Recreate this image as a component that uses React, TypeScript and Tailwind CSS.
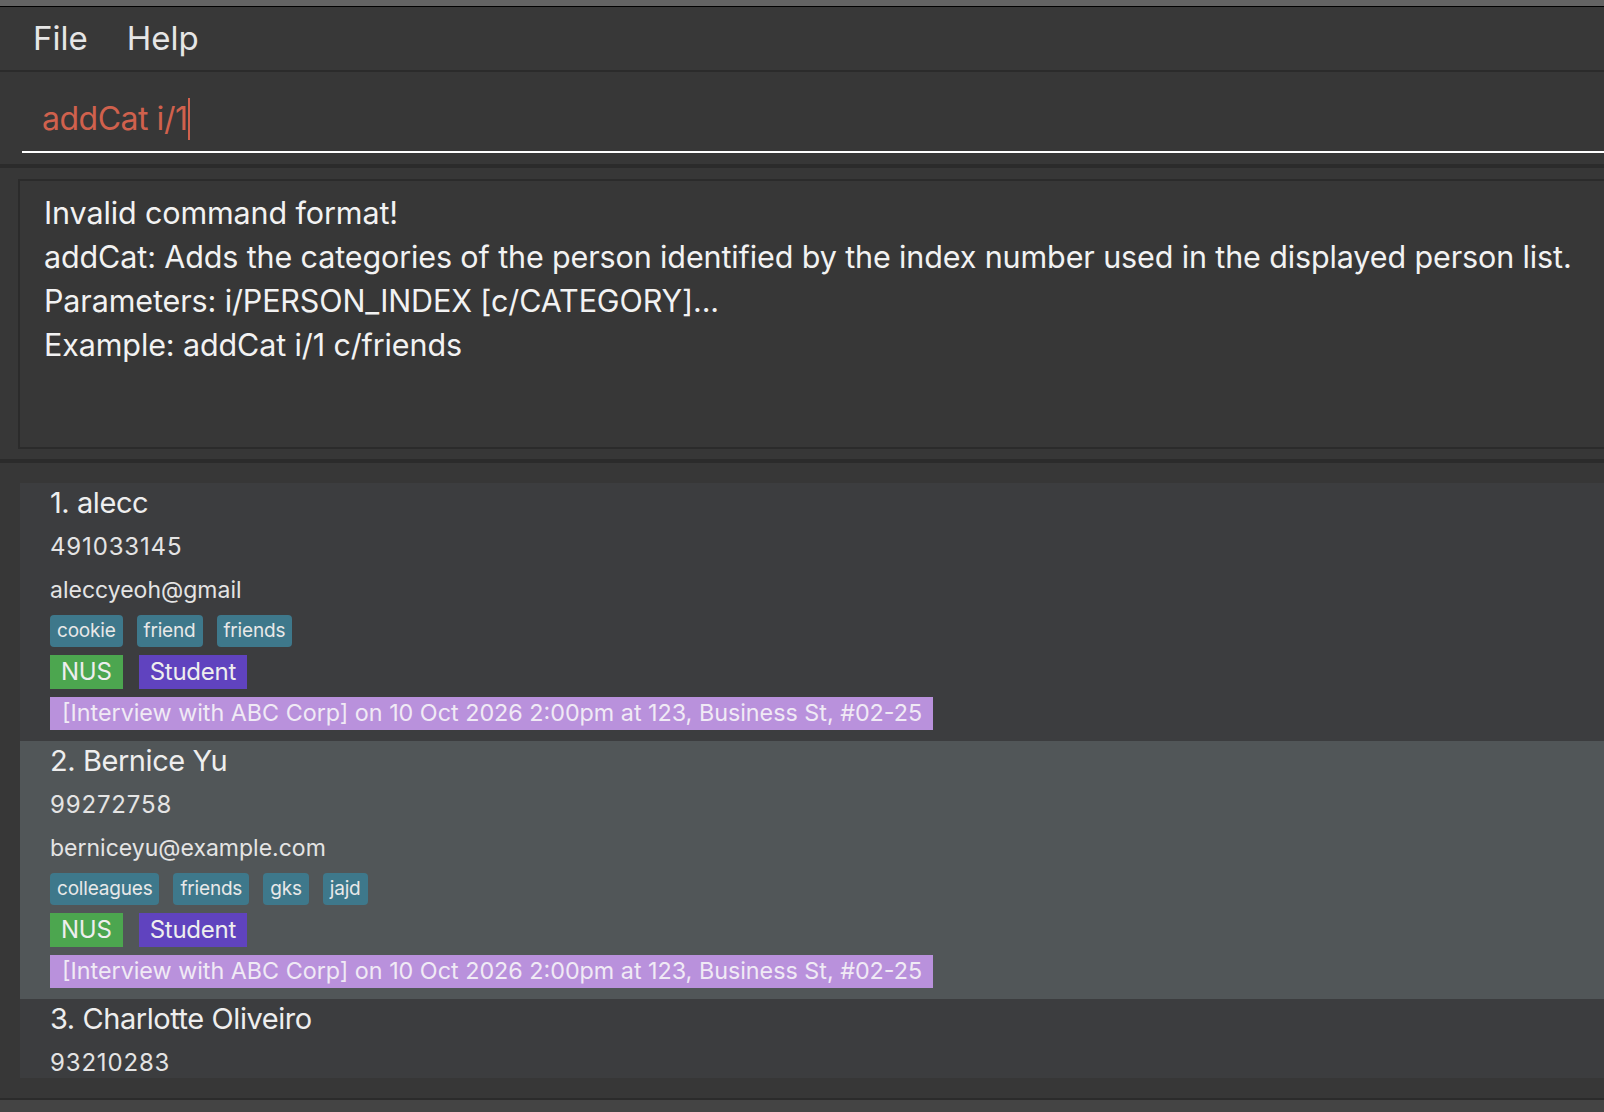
import React from 'react';

type Person = {
  name: string;
  phone: string;
  email?: string;
  tags?: string[];
  categories?: { label: string; tone: 'green' | 'purple' }[];
  event?: string;
};

const EVENT = '[Interview with ABC Corp] on 10 Oct 2026 2:00pm at 123, Business St, #02-25';

const people: Person[] = [
  {
    name: '1. alecc',
    phone: '491033145',
    email: 'aleccyeoh@gmail',
    tags: ['cookie', 'friend', 'friends'],
    categories: [
      { label: 'NUS', tone: 'green' },
      { label: 'Student', tone: 'purple' }
    ],
    event: EVENT
  },
  {
    name: '2. Bernice Yu',
    phone: '99272758',
    email: 'berniceyu@example.com',
    tags: ['colleagues', 'friends', 'gks', 'jajd'],
    categories: [
      { label: 'NUS', tone: 'green' },
      { label: 'Student', tone: 'purple' }
    ],
    event: EVENT
  },
  {
    name: '3. Charlotte Oliveiro',
    phone: '93210283',
    email: 'charlotte@example.com',
    tags: ['neighbours']
  }
];

function PersonCard({ person, selected }: { person: Person; selected: boolean }) {
  return (
    <div
      className={`flex flex-col pl-[30px] pb-[11px] shrink-0 ${
        selected ? 'bg-[#515658]' : 'bg-[#3c3d3f]'
      }`}
    >
      <div className="h-[40px] flex items-center text-[29px] text-[#eeeeee] tracking-[-0.015em]">
        {person.name}
      </div>
      <div className="mt-[4px] h-[40px] flex items-center text-[24px] text-[#e4e4e4] tracking-[0.035em]">
        {person.phone}
      </div>
      {person.email && (
        <div className="mt-[3px] h-[40px] flex items-center text-[23px] text-[#e4e4e4]">
          {person.email}
        </div>
      )}
      {person.tags && (
        <div className="mt-[5px] h-[32px] flex gap-[14px]">
          {person.tags.map(t => (
            <span
              key={t}
              className="h-full flex items-center px-[7px] rounded-[4px] bg-[#3e788b] text-[19px] text-[#e8e8e8] tracking-[-0.01em]"
            >
              {t}
            </span>
          ))}
        </div>
      )}
      {person.categories && (
        <div className="mt-[8px] h-[34px] flex gap-[16px]">
          {person.categories.map(c => (
            <span
              key={c.label}
              className={`h-full flex items-center px-[11px] text-[24px] text-[#eeeeee] tracking-[-0.01em] ${
                c.tone === 'green' ? 'bg-[#4ca64f]' : 'bg-[#6043bf]'
              }`}
            >
              {c.label}
            </span>
          ))}
        </div>
      )}
      {person.event && (
        <div className="mt-[8px] h-[33px] flex">
          <span className="h-full flex items-center pl-[12px] pr-[11px] bg-[#b991dc] text-[23.3px] text-[#f0eaf5]">
            {person.event}
          </span>
        </div>
      )}
    </div>
  );
}

export default function App() {
  return (
    <div className="w-[1604px] h-[1112px] overflow-hidden flex flex-col bg-[#373737] font-['Inter','Liberation_Sans',sans-serif]">
      <div className="h-[6px] bg-[#636363] border-b border-black shrink-0 box-content" />

      {/* menu bar */}
      <div className="h-[63px] shrink-0 flex items-center gap-[39px] pl-[33px] bg-[#383838] text-[33px] text-[#e6e6e6]">
        <span>File</span>
        <span>Help</span>
      </div>
      <div className="h-[2px] shrink-0 bg-[#2b2b2b]" />

      {/* command box */}
      <div className="h-[92px] shrink-0 pt-[8px] pl-[22px]">
        <div className="h-[73px] flex items-center pt-[6px] pl-[20px] border-b-2 border-white text-[32px] text-[#d0614d] tracking-[-0.015em]">
          <span>addCat i/1</span>
          <span className="ml-[1px] w-[2px] h-[42px] bg-[#d0614d]" />
        </div>
      </div>
      <div className="h-[4px] shrink-0 bg-[#2b2b2b]" />

      {/* result display */}
      <div className="h-[291px] shrink-0 pt-[11px] pl-[18px] pb-[10px]">
        <div className="h-full border-2 border-r-0 border-[#2b2b2b] pl-[24px] pt-[10px] text-[30.5px] leading-[44px] text-[#f2f2f2] tracking-[-0.004em] whitespace-nowrap">
          <div>Invalid command format!</div>
          <div>
            addCat: Adds the categories of the person identified by the index number used in the displayed person list.
          </div>
          <div>Parameters: i/PERSON_INDEX [c/CATEGORY]...</div>
          <div>Example: addCat i/1 c/friends</div>
        </div>
      </div>
      <div className="h-[4px] shrink-0 bg-[#2b2b2b]" />

      {/* person list */}
      <div className="h-[635px] shrink-0 pt-[20px] pl-[20px] pb-[20px]">
        <div className="h-full overflow-hidden flex flex-col bg-[#3c3d3f]">
          {people.map((p, i) => (
            <PersonCard key={p.name} person={p} selected={i === 1} />
          ))}
        </div>
      </div>
      <div className="h-[2px] shrink-0 bg-[#2b2b2b]" />
      <div className="flex-1 bg-[#444444]" />
    </div>
  );
}
